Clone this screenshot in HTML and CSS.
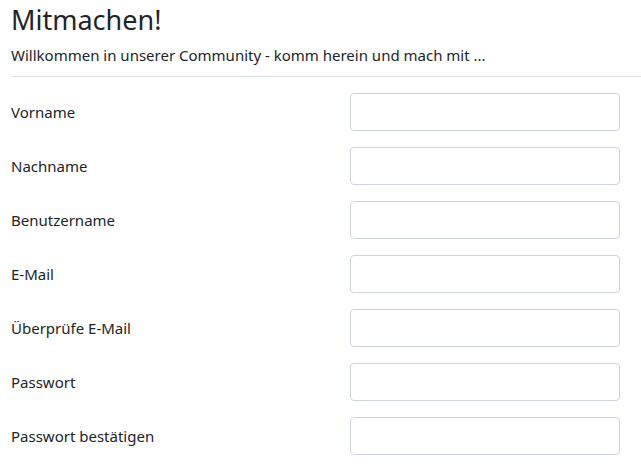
FILE: index.html
```html
<!DOCTYPE html>
<html lang="de">
<head>
<meta charset="utf-8">
<link rel="stylesheet" href="styles.css">
</head>
<body>
<div class="page">
  <h1 class="title">Mitmachen!</h1>
  <p class="lead">Willkommen in unserer Community - komm herein und mach mit ...</p>
  <hr class="divider">
  <form class="form">
    <div class="row"><label class="label">Vorname</label><input class="input" type="text"></div>
    <div class="row"><label class="label">Nachname</label><input class="input" type="text"></div>
    <div class="row"><label class="label">Benutzername</label><input class="input" type="text"></div>
    <div class="row"><label class="label">E-Mail</label><input class="input" type="text"></div>
    <div class="row"><label class="label">Überprüfe E-Mail</label><input class="input" type="text"></div>
    <div class="row"><label class="label">Passwort</label><input class="input" type="password"></div>
    <div class="row"><label class="label">Passwort bestätigen</label><input class="input" type="password"></div>
  </form>
</div>
</body>
</html>
```
FILE: styles.css
```css
html, body {
  margin: 0;
  padding: 0;
  background: #fff;
}
body {
  font-family: "Noto Sans", "Open Sans", sans-serif;
  font-size: 15px;
  color: #212529;
}
.page {
  padding-left: 11px;
}
.title {
  margin: 0;
  padding-top: 3px;
  font-size: 27px;
  font-weight: 400;
  line-height: 34px;
}
.lead {
  margin: 7px 0 0;
  line-height: 22px;
}
.divider {
  margin: 10px 0 16px;
  border: 0;
  border-top: 1px solid #dee2e6;
}
.form {
  display: flex;
  flex-direction: column;
  gap: 16px;
}
.row {
  display: grid;
  grid-template-columns: 339px 270px;
  align-items: center;
}
.label {
  line-height: 22px;
}
.input {
  box-sizing: border-box;
  height: 38px;
  width: 270px;
  margin: 0;
  border: 1px solid #ced4da;
  border-radius: 4px;
  background: #fff;
  font: inherit;
  padding: 6px 12px;
}
```
